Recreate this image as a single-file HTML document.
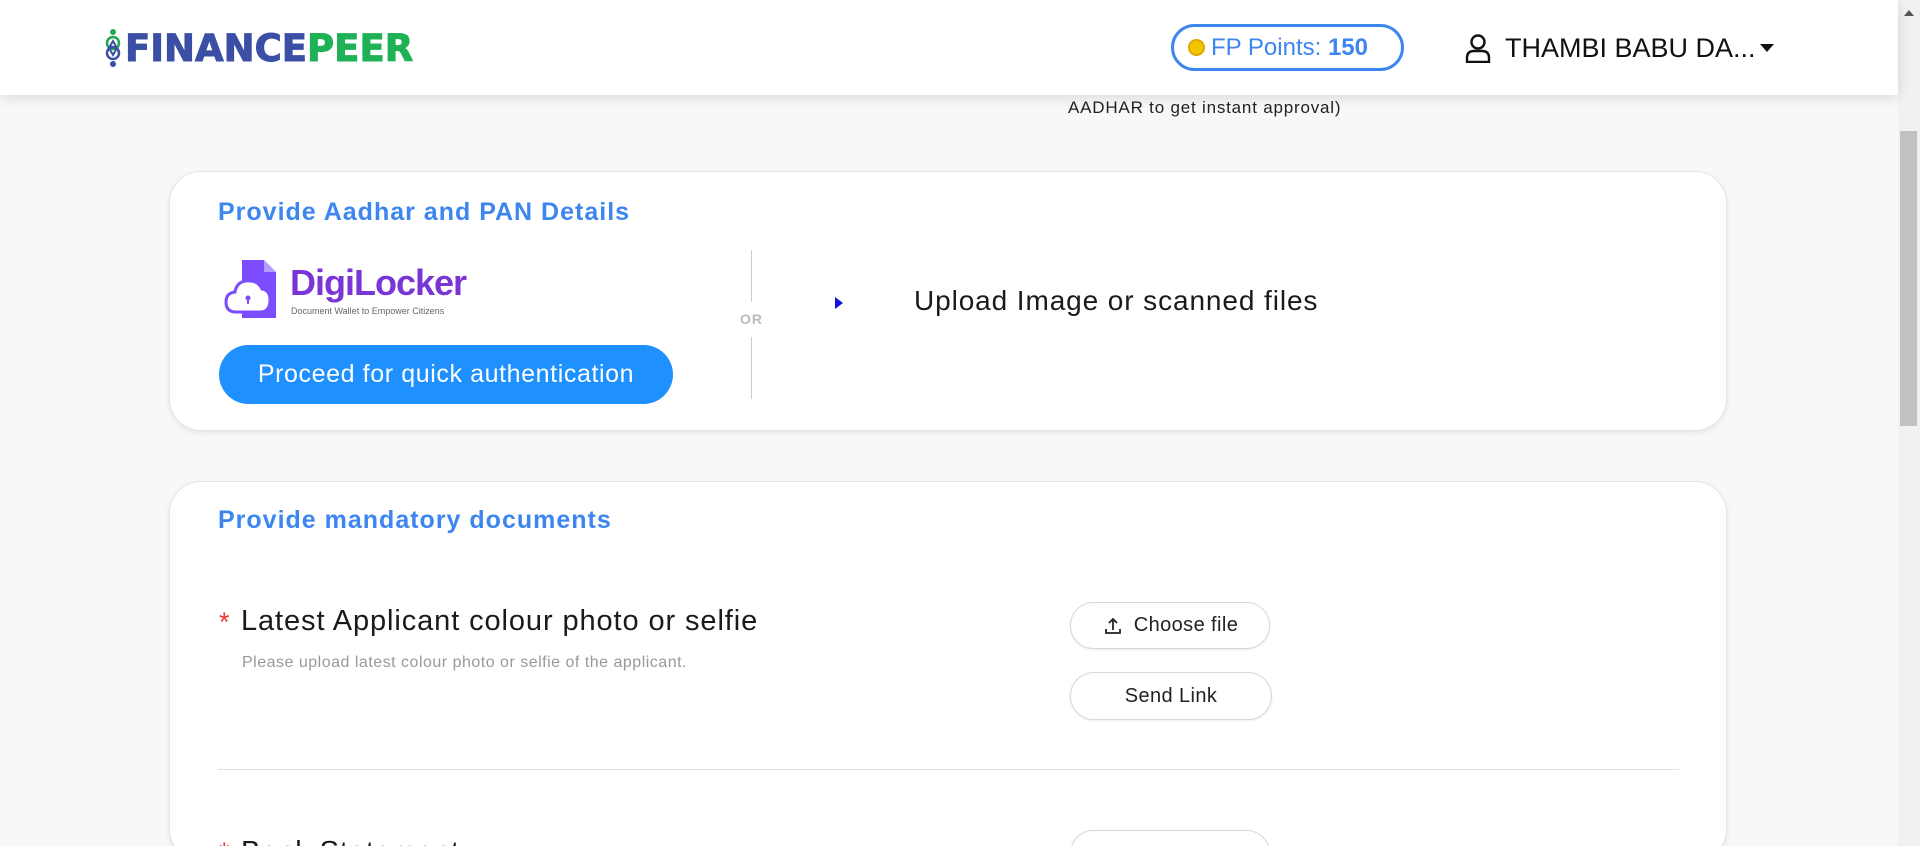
<!DOCTYPE html>
<html style="width:1920px;height:846px;overflow:hidden"><head><meta charset="utf-8"><style>
*{box-sizing:border-box;margin:0;padding:0}
body{width:1920px;height:846px;overflow:hidden;background:#f7f8fa;font-family:"Liberation Sans",sans-serif;position:relative;color:#1a1a1a}
.hdr{position:absolute;left:0;top:0;width:1898px;height:95px;background:#fff;box-shadow:0 3px 12px rgba(0,0,0,.12);z-index:2}
.abs{position:absolute}
.sb{position:absolute;left:1898px;top:0;width:22px;height:846px;background:#f1f1f1}
.thumb{position:absolute;left:1900px;top:131px;width:17px;height:295px;background:#c1c1c1}
.card{position:absolute;left:169px;width:1558px;background:#fff;border:1px solid #e4e6ea;border-radius:32px;box-shadow:0 2px 6px rgba(0,0,0,.08);overflow:hidden}
.h{color:#3d86f0;font-weight:bold;font-size:25px;letter-spacing:1px}
.btn{position:absolute;border:1px solid #d8d8d8;border-radius:24px;background:#fff;font-size:20px;letter-spacing:.4px;display:flex;align-items:center;justify-content:center;color:#222;box-shadow:0 1px 2px rgba(0,0,0,.08)}
.t{font-size:28px;letter-spacing:.9px}
</style></head><body>
<div class="hdr">
  <svg class="abs" style="left:104px;top:28px" width="18" height="40" viewBox="0 0 18 40">
    <circle cx="9" cy="4" r="3" fill="#1fa84f"/>
    <circle cx="9" cy="15" r="6" fill="none" stroke="#1fa84f" stroke-width="2.5"/>
    <circle cx="9" cy="25" r="6" fill="none" stroke="#3b4fa5" stroke-width="2.5"/>
    <path d="M9 13 L13 20 L9 27 L5 20Z" fill="none" stroke="#3b4fa5" stroke-width="2"/>
    <circle cx="9" cy="36" r="3" fill="#3b4fa5"/>
  </svg>
  <div class="abs" style="left:125px;top:27px;font-size:37px;font-weight:900;letter-spacing:0px;color:#3b4fa5;font-family:'DejaVu Sans','Liberation Sans',sans-serif;-webkit-text-stroke:1px currentColor">FINANCE<span style="color:#1fb156">PEER</span></div>
  <div class="abs" style="left:1171px;top:24px;width:233px;height:47px;border:3px solid #3d86f0;border-radius:24px;display:flex;align-items:center;padding-left:14px;color:#3d86f0;font-size:24px">
    <span style="width:17px;height:17px;border-radius:50%;background:#f5c400;border:2px solid #e0a800;margin-right:6px;display:inline-block"></span>FP Points:&nbsp;<b>150</b></div>
  <svg class="abs" style="left:1464px;top:33px" width="28" height="30" viewBox="0 0 28 30"><circle cx="14" cy="9" r="6.5" fill="none" stroke="#111" stroke-width="2.4"/><path d="M3 29 V25 Q3 18 10 18 H18 Q25 18 25 25 V29 Z" fill="none" stroke="#111" stroke-width="2.4"/></svg>
  <div class="abs" style="left:1505px;top:33px;font-size:27px;color:#111">THAMBI BABU DA...</div>
  <div class="abs" style="left:1760px;top:44px;width:0;height:0;border-left:7px solid transparent;border-right:7px solid transparent;border-top:8px solid #111"></div>
</div>
<div class="sb"></div><div class="thumb"></div>
<div class="abs" style="left:1904px;top:10px;border-left:5px solid transparent;border-right:5px solid transparent;border-bottom:6px solid #555;width:0"></div>
<div class="abs" style="left:1068px;top:98px;font-size:17px;letter-spacing:.8px;color:#222">AADHAR to get instant approval)</div>

<div class="card" style="top:171px;height:260px">
  <div class="abs h" style="left:48px;top:26px">Provide Aadhar and PAN Details</div>
  <svg class="abs" style="left:54px;top:86px" width="70" height="62" viewBox="0 0 70 62">
    <path d="M18 2 H40 L52 14 V60 H18Z" fill="#7c4dff"/>
    <path d="M40 2 V14 H52Z" fill="#b39dff"/>
    <path d="M12 54 Q2 54 2 44 Q2 35 11 34 Q13 22 26 23 Q34 23 38 31 Q46 32 46 42 Q46 54 36 54Z" fill="#fff" stroke="#7c4dff" stroke-width="3"/>
    <circle cx="24" cy="40" r="2.5" fill="#7c4dff"/><rect x="23" y="40" width="2" height="6" fill="#7c4dff"/>
  </svg>
  <div class="abs" style="left:120px;top:90px;font-size:36px;font-weight:bold;color:#7a35d6;letter-spacing:-1px">DigiLocker</div>
  <div class="abs" style="left:121px;top:134px;font-size:9px;color:#666">Document Wallet to Empower Citizens</div>
  <div class="abs" style="left:49px;top:173px;width:454px;height:59px;border-radius:30px;background:#1e90ff;color:#fff;font-size:25px;letter-spacing:.6px;display:flex;align-items:center;justify-content:center">Proceed for quick authentication</div>
  <div class="abs" style="left:581px;top:78px;width:1px;height:52px;background:#ccc"></div>
  <div class="abs" style="left:581px;top:165px;width:1px;height:62px;background:#ccc"></div>
  <div class="abs" style="left:570px;top:139px;font-size:14px;font-weight:bold;color:#bbb;letter-spacing:1px">OR</div>
  <div class="abs" style="left:665px;top:125px;border-top:6px solid transparent;border-bottom:6px solid transparent;border-left:8px solid #1010e0;width:0"></div>
  <div class="abs t" style="left:744px;top:113px;color:#1a1a1a">Upload Image or scanned files</div>
</div>

<div class="card" style="top:481px;height:380px">
  <div class="abs h" style="left:48px;top:24px">Provide mandatory documents</div>
  <div class="abs" style="left:49px;top:125px;font-size:27px;color:#e53935">*</div>
  <div class="abs t" style="left:71px;top:123px;font-size:29px">Latest Applicant colour photo or selfie</div>
  <div class="abs" style="left:72px;top:172px;font-size:16px;letter-spacing:.5px;color:#999">Please upload latest colour photo or selfie of the applicant.</div>
  <div class="btn" style="left:900px;top:120px;width:200px;height:47px">
    <svg width="22" height="22" viewBox="0 0 22 22" style="margin-right:10px"><path d="M11 15 V4 M7 8 L11 4 L15 8 M4 14 V18 H18 V14" fill="none" stroke="#222" stroke-width="1.8"/></svg>Choose file</div>
  <div class="btn" style="left:900px;top:190px;width:202px;height:48px">Send Link</div>
  <div class="abs" style="left:48px;top:287px;width:1461px;height:1px;background:#e2e2e2"></div>
  <div class="abs" style="left:49px;top:355px;font-size:27px;color:#e53935">*</div>
  <div class="abs t" style="left:71px;top:354px;font-size:29px">Bank Statement</div>
  <div class="btn" style="left:900px;top:348px;width:200px;height:47px"></div>
</div>
</body></html>
